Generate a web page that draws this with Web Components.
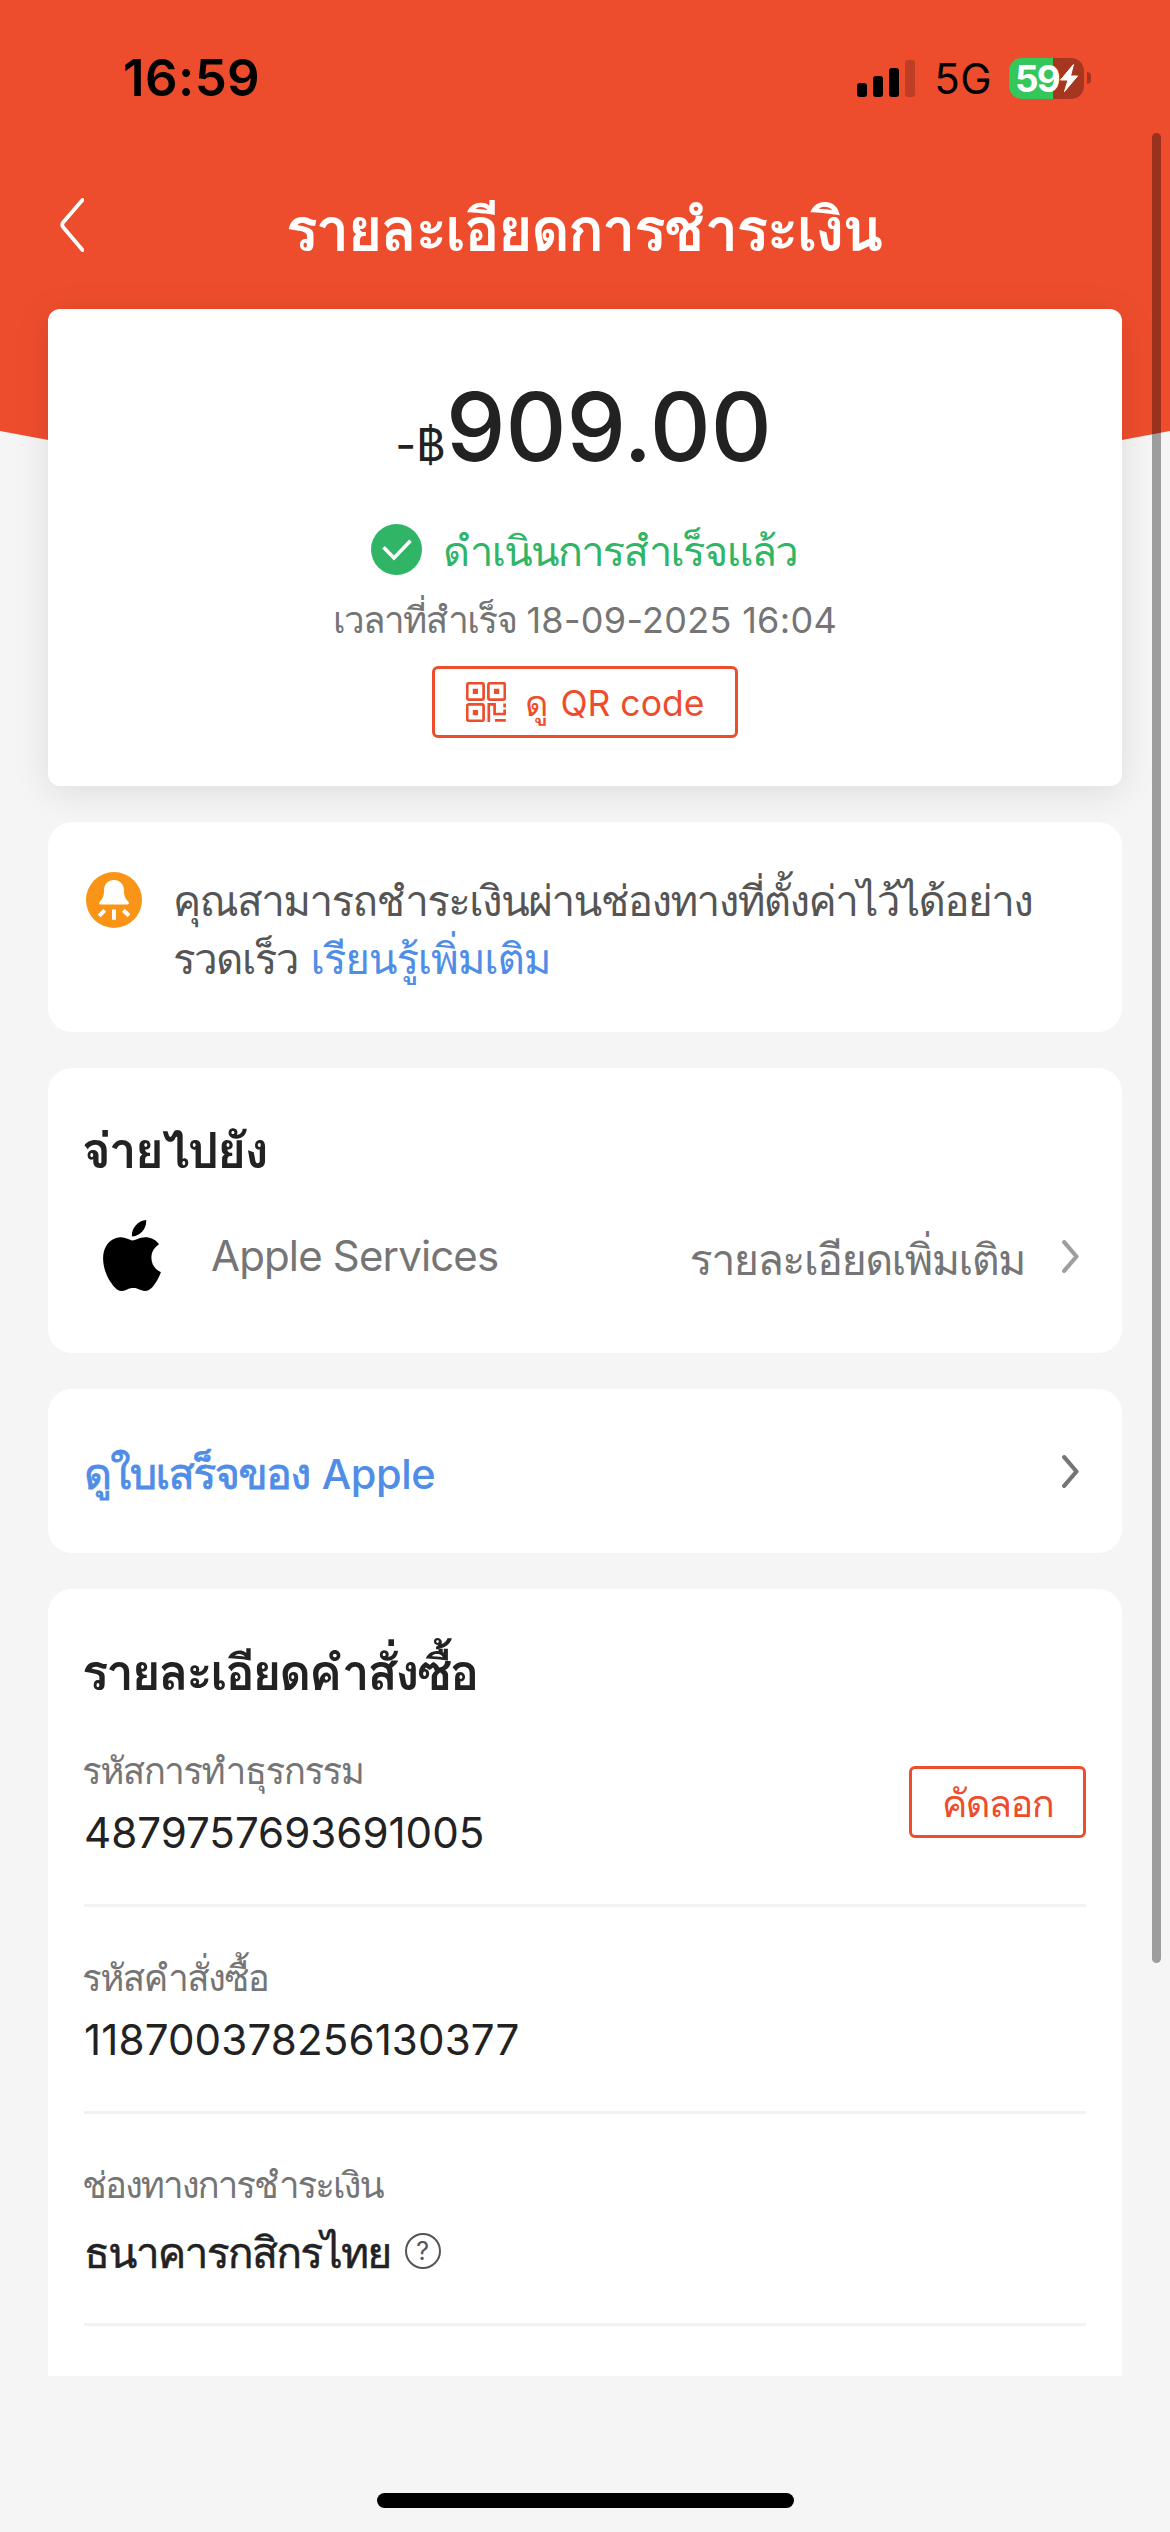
<!DOCTYPE html>
<html lang="th">
<head>
<meta charset="utf-8">
<title>รายละเอียดการชำระเงิน</title>
<style>
html,body{margin:0;padding:0}
body{width:1170px;height:2532px;overflow:hidden;background:#f5f5f5;font-family:Inter,"Loma","Noto Sans",sans-serif;color:#222}
</style>
</head>
<body>
<payment-page></payment-page>
<script>
const define = (name, html) => customElements.define(name, class extends HTMLElement {
  constructor() {
    super();
    const t = document.createElement('template');
    t.innerHTML = html;
    this.attachShadow({ mode: 'open' }).append(t.content.cloneNode(true));
  }
});

define('status-bar', `
<style>
:host{display:flex;align-items:center;height:156px;box-sizing:border-box;padding:0 79px 0 123px;color:#000}
.time{font-size:51px;font-weight:600;letter-spacing:.4px;line-height:60px;margin-right:auto}
.bars{display:block;width:58px;height:37px;margin-right:19px}
.net{font-size:42px;letter-spacing:.4px;line-height:50px;padding-top:2px;margin-right:17px}
.bat{display:flex;align-items:center;justify-content:center;width:75px;height:41px;border-radius:13px;background:linear-gradient(90deg,#34c759 44px,rgba(0,0,0,.3) 44px);color:#fff}
.pct{font-size:37px;font-weight:700;letter-spacing:-1.8px;line-height:41px;margin-right:1px}
.bolt{width:18px;height:28px;flex:none}
.nub{width:4px;height:12px;margin-left:3px;border-radius:0 4px 4px 0;background:rgba(0,0,0,.3)}
</style>
<span class="time">16:59</span>
<svg class="bars" viewBox="0 0 58 37"><rect y="23" width="10" height="14" rx="3"/><rect x="16" y="16" width="10" height="21" rx="3"/><rect x="32" y="8" width="10" height="29" rx="3"/><rect x="48" width="10" height="37" rx="3" opacity=".2"/></svg>
<span class="net">5G</span>
<div class="bat"><span class="pct">59</span><svg class="bolt" viewBox="0 0 18 28"><path d="M13.5 .5 .5 16H8L4.5 27.5 17.5 12H10.5Z" fill="#fff" stroke="#fff" stroke-width="1" stroke-linejoin="round"/></svg></div>
<div class="nub"></div>`);

define('nav-header', `
<style>
:host{display:block;height:540px;background:#ee4d2d;clip-path:polygon(0 0,100% 0,100% 431px,50% 540px,0 431px);color:#fff}
.bar{display:flex;align-items:flex-start;padding:34px 60px 0}
svg{width:24px;height:54px;margin-top:8px;flex:none}
.title{flex:1;text-align:center;font-size:60px;letter-spacing:-2.05px;font-weight:700;line-height:80px;padding-right:27px;margin-top:-1px;white-space:nowrap}
</style>
<status-bar></status-bar>
<div class="bar"><svg viewBox="0 0 24 54"><path d="M22.5 2 3 24.5Q1.5 26.8 3 29L22.5 52" fill="none" stroke="#fff" stroke-width="3.8" stroke-linecap="round" stroke-linejoin="round"/></svg><div class="title"><slot></slot></div></div>`);

define('outline-button', `
<style>
:host{display:flex;align-items:center;justify-content:center;box-sizing:border-box;height:72px;border:3px solid #ee4d2d;border-radius:6px;color:#ee4d2d;white-space:nowrap}
</style><slot></slot>`);

define('info-card', `
<style>
:host{display:block;box-sizing:border-box;background:#fff;border-radius:24px}
</style><slot></slot>`);

define('chevron-right', `
<style>:host{display:block;width:17px;height:33px;flex:none}svg{display:block}</style>
<svg width="17" height="33" viewBox="0 0 17 33"><path d="M2.2 2.2 14.5 16.5 2.2 30.8" fill="none" stroke="currentColor" stroke-width="4.2" stroke-linecap="round" stroke-linejoin="round"/></svg>`);

define('amount-summary', `
<style>
:host{display:flex;flex-direction:column;align-items:center;height:477px;box-sizing:border-box;padding-top:68px;background:#fff;border-radius:12px;box-shadow:0 6px 36px rgba(0,0,0,.1);white-space:nowrap}
.amount{display:flex;align-items:baseline;height:100px;line-height:100px;padding-right:3px}
.cur{font-size:45.5px}
.num{font-size:94.6px;font-weight:500}
.state{display:flex;gap:21px;height:51px;margin-top:47px;padding-right:2px;color:#30b566}
.state span{font-size:41.7px;letter-spacing:-1.75px;line-height:51px;padding-top:2px}
.date{display:flex;align-items:baseline;height:50px;line-height:50px;margin-top:20px;color:#757575;font-size:36px;letter-spacing:.3px}
.date .th{font-size:36.8px;letter-spacing:-1.6px;margin-right:10px}
outline-button{width:306px;margin-top:21px;justify-content:flex-start;padding-left:31px}
outline-button svg{width:40px;height:40px;margin-right:19px}
.qr{display:flex;align-items:baseline;gap:12px;font-size:35.5px;line-height:50px;padding-top:2px}
.qr .th{font-size:36px}
</style>
<div class="amount"><span class="cur">-฿</span><span class="num">909.00</span></div>
<div class="state"><svg width="51" height="51" viewBox="0 0 51 51"><circle cx="25.5" cy="25.5" r="25.5" fill="#30b566"/><path d="M12.5 23.3 23 34 39.5 16.8" fill="none" stroke="#fff" stroke-width="3.6"/></svg><span>ดำเนินการสำเร็จแล้ว</span></div>
<div class="date"><span class="th">เวลาที่สำเร็จ</span><span>18-09-2025 16:04</span></div>
<outline-button><svg viewBox="0 0 40 40" fill="none" stroke="#ee4d2d" stroke-width="2.7"><rect x="1.2" y="1.2" width="16.4" height="16.4" rx="1.6"/><rect x="22.4" y="1.2" width="16.4" height="16.4" rx="1.6"/><rect x="1.2" y="22.4" width="16.4" height="16.4" rx="1.6"/><path d="M22.8 40V22.4H28.6V32H38.6V27.5M38.6 25.5V21.5M29 38.4H39.8"/><path d="M6.8 6.8h5.2v5.2h-5.2zM28 6.8h5.2v5.2h-5.2zM6.8 28h5.2v5.2h-5.2z" fill="#ee4d2d" stroke="none"/></svg><div class="qr"><span class="th">ดู</span><span>QR code</span></div></outline-button>`);

define('tip-notice', `
<style>
:host{display:flex;gap:31px;padding:50px 38px 0;height:160px;color:#555;font-size:42.2px;letter-spacing:-1.62px;line-height:58px;white-space:nowrap}
svg{flex:none}
.text{word-spacing:2.5px}
a{color:#4f8de6;letter-spacing:-1.2px}
</style>
<svg width="56" height="56" viewBox="0 0 56 56"><circle cx="28" cy="28" r="28" fill="#f99417"/><path d="M28 8C22 8 18 12.5 18 18.5C18 24 16.5 27 13.5 30Q12.5 32.5 15 32.5H41Q43.8 32.5 42.7 30C39.5 27 38 24 38 18.5C38 12.5 34 8 28 8Z" fill="#fff"/><path d="M28 37.5V47.8M18.7 38.3 13.2 43.8M37.3 38.3 43 43.8" stroke="#fff" stroke-width="4"/></svg>
<div class="text">คุณสามารถชำระเงินผ่านช่องทางที่ตั้งค่าไว้ได้อย่าง<br>รวดเร็ว <a>เรียนรู้เพิ่มเติม</a></div>`);

define('payee-section', `
<style>
:host{display:block;height:285px;box-sizing:border-box;padding:52px 43px 0 36px;white-space:nowrap}
h2{margin:0 0 40px -2px;font-size:49.2px;letter-spacing:-1.7px;font-weight:700;line-height:60px}
.row{display:flex;height:72px;line-height:72px;color:#757575}
.logo{width:58px;height:71px;margin-left:19px}
.name{font-size:42px;letter-spacing:-.85px;margin-left:50px}
.more{font-size:43.2px;letter-spacing:-1.6px;padding-top:3px;margin:0 37px 0 auto}
chevron-right{margin-top:20px;color:#9e9e9e}
</style>
<h2>จ่ายไปยัง</h2>
<div class="row"><svg class="logo" viewBox="2.2 0 19.6 24"><path d="M12.152 6.896c-.948 0-2.415-1.078-3.96-1.04-2.04.027-3.91 1.183-4.961 3.014-2.117 3.675-.546 9.103 1.519 12.09 1.013 1.454 2.208 3.09 3.792 3.039 1.52-.065 2.09-.987 3.935-.987 1.831 0 2.35.987 3.96.948 1.637-.026 2.676-1.48 3.676-2.948 1.156-1.688 1.636-3.325 1.662-3.415-.039-.013-3.182-1.221-3.22-4.857-.026-3.04 2.48-4.494 2.597-4.559-1.429-2.09-3.623-2.324-4.39-2.376-2-.156-3.675 1.09-4.61 1.09zM15.53 3.83c.843-1.012 1.4-2.427 1.245-3.83-1.207.052-2.662.805-3.532 1.818-.78.896-1.454 2.338-1.273 3.714 1.338.104 2.715-.688 3.559-1.701"/></svg><span class="name">Apple Services</span><span class="more">รายละเอียดเพิ่มเติม</span><chevron-right></chevron-right></div>`);

define('receipt-link', `
<style>
:host{display:flex;align-items:center;justify-content:space-between;height:164px;box-sizing:border-box;padding:0 43px 0 36px;white-space:nowrap}
.label{display:flex;align-items:baseline;gap:12px;color:#4f8de6;font-size:41.5px;font-weight:500;letter-spacing:-.4px;line-height:60px;padding-top:4px}
.th{font-size:43.2px;letter-spacing:-1.7px;-webkit-text-stroke:.8px #4f8de6}
chevron-right{color:#757575}
</style>
<div class="label"><span class="th">ดูใบเสร็จของ</span><span>Apple</span></div><chevron-right></chevron-right>`);

define('detail-row', `
<style>
:host{display:flex;justify-content:space-between;align-items:flex-start;box-sizing:border-box;height:207px;padding-top:46px;border-bottom:3px solid #f2f2f2;white-space:nowrap}
.label{display:block;margin-left:-2px;color:#757575;font-size:36.7px;letter-spacing:var(--label-spacing,-1.55px);line-height:50px}
.value{display:flex;align-items:center;font-size:42.1px;letter-spacing:var(--value-spacing,0);line-height:60px;margin-top:7px}
:host([tall]){height:212px}
:host([tall]) .value{font-size:42.7px;letter-spacing:-1.8px;margin-top:13px;-webkit-text-stroke:.5px #222}
</style>
<div><span class="label"><slot name="label"></slot></span><div class="value"><slot></slot></div></div><slot name="action"></slot>`);

define('help-mark', `
<style>:host{display:flex;align-items:center;justify-content:center;width:36px;height:36px;box-sizing:border-box;border:2.5px solid #555;border-radius:50%;margin:-4px 0 0 14px;font-size:25px;letter-spacing:0;line-height:30px;color:#555;-webkit-text-stroke:0}</style>
<span>?</span>`);

define('order-details', `
<style>
:host{display:block;height:787px;box-sizing:border-box;padding:53px 36px 0;white-space:nowrap}
h2{margin:0 0 -2px -2px;font-size:49.2px;letter-spacing:-2.15px;font-weight:700;line-height:60px}
outline-button{width:177px;margin-top:20px;font-size:38px;letter-spacing:-1.6px;line-height:60px}
outline-button span{padding-top:2px}
.order{--label-spacing:-1.55px;--value-spacing:.12px}
.channel{--label-spacing:-2px}
</style>
<h2>รายละเอียดคำสั่งซื้อ</h2>
<detail-row><span slot="label">รหัสการทำธุรกรรม</span>4879757693691005<outline-button slot="action"><span>คัดลอก</span></outline-button></detail-row>
<detail-row class="order"><span slot="label">รหัสคำสั่งซื้อ</span>118700378256130377</detail-row>
<detail-row class="channel" tall><span slot="label">ช่องทางการชำระเงิน</span>ธนาคารกสิกรไทย<help-mark></help-mark></detail-row>`);

define('payment-page', `
<style>
:host{display:block;position:relative;width:1170px;height:2532px;overflow:hidden}
main{display:flex;flex-direction:column;gap:36px;margin-top:-231px;padding:0 48px;position:relative}
.last{border-radius:24px 24px 0 0}
.home{width:417px;height:15px;border-radius:8px;background:#000;margin:117px auto 0}
.scroll{position:absolute;left:1152px;top:133px;width:9px;height:1830px;border-radius:5px;background:rgba(0,0,0,.355)}
</style>
<nav-header>รายละเอียดการชำระเงิน</nav-header>
<main>
<amount-summary></amount-summary>
<info-card><tip-notice></tip-notice></info-card>
<info-card><payee-section></payee-section></info-card>
<info-card><receipt-link></receipt-link></info-card>
<info-card class="last"><order-details></order-details></info-card>
</main>
<div class="home"></div>
<div class="scroll"></div>`);
</script>
</body>
</html>
